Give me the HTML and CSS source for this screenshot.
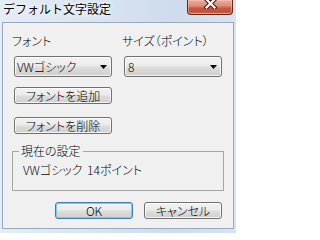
FILE: index.html
```html
<!DOCTYPE html>
<html lang="ja">
<head>
<meta charset="utf-8">
<title>デフォルト文字設定</title>
<link rel="stylesheet" href="styles.css">
</head>
<body>
<div class="window">
  <div class="titlebar">
    <span class="title">デフォルト文字設定</span>
    <span class="close">
      <svg width="13" height="11" viewBox="0 0 13 11">
        <path d="M2.5 1.5 L10.5 9.5 M10.5 1.5 L2.5 9.5" stroke="#4a1008" stroke-width="4.2" stroke-linecap="square"/>
        <path d="M2.5 1.5 L10.5 9.5 M10.5 1.5 L2.5 9.5" stroke="#ffffff" stroke-width="2.2" stroke-linecap="square"/>
      </svg>
    </span>
  </div>
  <div class="client">
    <div class="fields">
      <div class="field">
        <label class="lbl">フォント</label>
        <div class="combo"><span class="val">VWゴシック</span><svg class="arrow" width="7" height="4" viewBox="0 0 7 4"><path d="M0 0 H7 L3.5 4 Z" fill="#000"/></svg></div>
      </div>
      <div class="field">
        <label class="lbl">サイズ（ポイント）</label>
        <div class="combo"><span class="val num">8</span><svg class="arrow" width="7" height="4" viewBox="0 0 7 4"><path d="M0 0 H7 L3.5 4 Z" fill="#000"/></svg></div>
      </div>
    </div>
    <div class="btn side first">フォントを追加</div>
    <div class="btn side second">フォントを削除</div>
    <fieldset class="group">
      <legend>現在の設定</legend>
      <div class="current">VWゴシック 14ポイント</div>
    </fieldset>
    <div class="actions">
      <div class="btn default">OK</div>
      <div class="btn">キャンセル</div>
    </div>
  </div>
</div>
</body>
</html>
```
FILE: styles.css
```css
* { box-sizing: border-box; }
html, body { margin: 0; padding: 0; }
body {
  width: 236px;
  height: 233px;
  overflow: hidden;
  font-family: "Noto Sans CJK JP", "Noto Sans", sans-serif;
  font-size: 12px;
  font-weight: 300;
  line-height: 14px;
  color: #000;
}
.window {
  width: 236px;
  height: 233px;
  display: flex;
  flex-direction: column;
  background: linear-gradient(90deg, #e4ecf6 0%, #d9e4f1 40%, #cddbec 75%, #d8e4f2 100%);
}
.titlebar {
  height: 22px;
  display: flex;
  justify-content: space-between;
  align-items: flex-start;
}
.title {
  padding: 1px 0 0 3px;
  font-size: 12px;
  font-weight: 400;
  line-height: 16px;
  color: #000;
  text-shadow: 0 0 4px #fff, 0 0 8px #fff;
}
.close {
  width: 46px;
  height: 15px;
  margin-right: 3px;
  border: 1px solid #6b2418;
  border-top: none;
  border-radius: 0 0 4px 4px;
  background: linear-gradient(#e6ada0 0%, #dc8f7e 40%, #c9553f 60%, #c35039 85%, #d67a63 100%);
  box-shadow: inset 0 0 0 1px rgba(255, 210, 200, 0.45);
  display: flex;
  justify-content: center;
  align-items: flex-start;
}
.close svg { display: block; margin-top: -2px; }
.client {
  flex: 1;
  margin: 0 2px 4px 2px;
  border: 1px solid #98a9be;
  background: #f0f0f0;
}
.fields {
  display: grid;
  grid-template-columns: 98px 98px;
  column-gap: 12px;
  margin: 11px 0 0 11px;
}
.lbl {
  display: block;
  height: 14px;
  margin: 0 0 8px -2px;
  font-feature-settings: "palt";
  white-space: nowrap;
}
.combo {
  height: 21px;
  border: 1px solid #707070;
  border-radius: 3px;
  background: linear-gradient(#f2f2f2 0%, #ebebeb 48%, #dddddd 52%, #cfcfcf 100%);
  box-shadow: inset 0 0 0 1px rgba(255, 255, 255, 0.75);
  display: flex;
  align-items: center;
  justify-content: space-between;
  padding: 0 4px 0 2px;
  font-feature-settings: "palt";
}
.val.num { padding-left: 1px; }
.arrow { display: block; margin-top: 1px; }
.btn {
  height: 17px;
  border: 1px solid #707070;
  border-radius: 3px;
  background: linear-gradient(#f2f2f2 0%, #ebebeb 48%, #dddddd 52%, #cfcfcf 100%);
  box-shadow: inset 0 0 0 1px rgba(255, 255, 255, 0.75);
  text-align: center;
  line-height: 15px;
  font-feature-settings: "palt";
  white-space: nowrap;
}
.side {
  width: 98px;
  margin-left: 11px;
}
.side.first { margin-top: 10px; }
.side.second { margin-top: 13px; }
.group {
  width: 212px;
  margin: 10px 0 0 9px;
  padding: 5px 10px 13px 10px;
  border: 1px solid #a6a6a6;
  min-inline-size: 0;
}
.group legend {
  margin-left: -4px;
  padding: 0 2px;
  line-height: 14px;
  font-feature-settings: "palt";
}
.current {
  line-height: 14px;
  font-feature-settings: "palt";
  word-spacing: 2px;
  white-space: nowrap;
}
.actions {
  display: flex;
  gap: 11px;
  margin: 11px 0 0 52px;
}
.actions .btn { width: 78px; }
.btn.default {
  border-color: #3c7fb1;
  box-shadow: inset 0 0 0 1px #6fd2f5;
}
```
